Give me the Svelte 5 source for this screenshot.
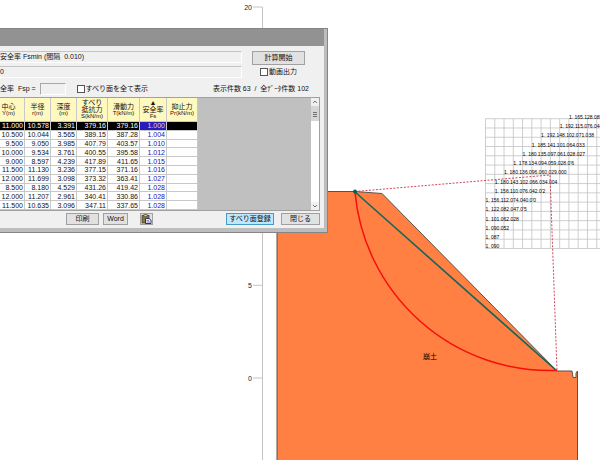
<script lang="ts">
  const columns = [
    { lines: ['中心'], unit: 'Y(m)', width: 32 },
    { lines: ['半径'], unit: 'r(m)', width: 26 },
    { lines: ['深度'], unit: '(m)', width: 26 },
    { lines: ['すべり', '抵抗力'], unit: 'S(kN/m)', width: 31 },
    { lines: ['滑動力'], unit: 'T(kN/m)', width: 32 },
    { lines: ['▲', '安全率'], unit: 'Fs', width: 27 },
    { lines: ['抑止力'], unit: 'Pr(kN/m)', width: 31 },
  ];

  const rows = [
    ['11.000', '10.578', '3.391', '379.16', '379.16', '1.000', ''],
    ['10.500', '10.044', '3.565', '389.15', '387.28', '1.004', ''],
    ['9.500', '9.050', '3.985', '407.79', '403.57', '1.010', ''],
    ['10.000', '9.534', '3.761', '400.55', '395.58', '1.012', ''],
    ['9.000', '8.597', '4.239', '417.89', '411.65', '1.015', ''],
    ['11.500', '11.130', '3.236', '377.15', '371.16', '1.016', ''],
    ['12.000', '11.699', '3.098', '373.32', '363.41', '1.027', ''],
    ['8.500', '8.180', '4.529', '431.26', '419.42', '1.028', ''],
    ['12.000', '11.207', '2.961', '340.41', '330.86', '1.028', ''],
    ['11.500', '10.635', '3.096', '347.11', '337.65', '1.028', ''],
  ];

  // elevation axis, metres to canvas
  const ticks = [20, 15, 10, 5, 0].map((value) => ({ value, y: 378 - value * 18.55 }));

  // search grid: first column that has a centre, then the Fs values of the row
  const cell = 9.27;
  const gridX = 485.5;
  const gridY = 118.7;
  const gridRows = [
    { col: 9, text: '1. 165.128.085' },
    { col: 8, text: '1. 192.115.076.044' },
    { col: 6, text: '1. 192.148.102.071.038' },
    { col: 5, text: '1. 185.141.101.064.033' },
    { col: 4, text: '1. 180.135.097.061.028.027' },
    { col: 3, text: "1. 178.134.094.059.028.0'6" },
    { col: 2, text: '1. 180.136.096.060.029.000' },
    { col: 1, text: '1. 180.143.102.066.034.004' },
    { col: 1, text: "1. 156.110.076.042.0'2" },
    { col: 0, text: "1. 156.112.074.040.0'0" },
    { col: 0, text: "1. 122.082.047.0'5" },
    { col: 0, text: '1. 101.062.028' },
    { col: 0, text: '1. 090.052' },
    { col: 0, text: '1. 087' },
    { col: 0, text: '1. 090' },
  ];

  let selected = $state(0);
  let showAll = $state(false);
  let movie = $state(false);
</script>

<main>
  <svg class="plot" viewBox="0 0 600 460" role="img" aria-label="斜面断面図">
    <g class="axis">
      <path d="M262.5 7V460" />
      {#each ticks as tick}
        <path d="M253 {tick.y}H262.5" />
        <text x="252" y={tick.y + 3} text-anchor="end">{tick.value}</text>
      {/each}
    </g>

    <path
      class="soil"
      d="M277 470V191.5H355L382 193.5L557 371H572L573 377.5H576V373L577.5 371V470Z"
    />
    <text class="soil-name" x="423" y="359">崩土</text>

    <g class="grid">
      {#each gridRows as _, i}
        <path d="M{gridX} {gridY + i * cell}H600" />
        <path d="M{gridX + i * cell} {gridY}V{gridY + 14 * cell}" />
      {/each}
    </g>
    <g class="grid-text">
      {#each gridRows as row, i}
        <text x={gridX + row.col * cell} y={gridY + i * cell}>{row.text}</text>
      {/each}
    </g>

    <path class="radius" d="M355 191.5L550 175L557 370.5" />
    <path class="chord" d="M355 192L557 371" />
    <path class="arc" d="M355 192A196 196 0 0 0 557 370.5" />
    <circle cx="355" cy="191.5" r="2" fill="#00605a" />
  </svg>

  <section class="window">
    <header class="titlebar"></header>
    <div class="body">
      <div class="top">
        <div class="fields">
          <div class="field">安全率 Fsmin (間隔&nbsp; 0.010)</div>
          <div class="field">0</div>
        </div>
        <div class="start">
          <button>計算開始</button>
          <label class="check"><input type="checkbox" bind:checked={movie} />動画出力</label>
        </div>
      </div>

      <div class="options">
        <label class="fsp">安全率&nbsp; Fsp =<input type="text" disabled /></label>
        <label class="check"><input type="checkbox" bind:checked={showAll} />すべり面を全て表示</label>
        <span class="count">表示件数 63 &nbsp;/&nbsp; 全ﾃﾞｰﾀ件数 102</span>
      </div>

      <div class="list">
        <table>
          <colgroup>
            {#each columns as column}
              <col style="width: {column.width}px" />
            {/each}
          </colgroup>
          <thead>
            <tr>
              {#each columns as column}
                <th>
                  {#each column.lines as line}
                    <div>{line}</div>
                  {/each}
                  <div class="unit">{column.unit}</div>
                </th>
              {/each}
            </tr>
          </thead>
          <tbody>
            {#each rows as row, i}
              <tr class:selected={i === selected} onclick={() => (selected = i)}>
                {#each row as value, c}
                  <td class:fs={c === 5}>{value}</td>
                {/each}
              </tr>
            {/each}
          </tbody>
        </table>
        <div class="scrollbar">
          <svg viewBox="0 0 8 8"><path d="M2 5L4 3L6 5" /></svg>
          <div class="thumb">
            <svg viewBox="0 0 8 8"><path d="M2 2.5H6M2 4.5H6M2 6.5H6" /></svg>
          </div>
          <svg class="down" viewBox="0 0 8 8"><path d="M2 3L4 5L6 3" /></svg>
        </div>
      </div>

      <footer>
        <button class="print">印刷</button>
        <button class="word">Word</button>
        <button class="paste" aria-label="貼り付け">
          <svg viewBox="0 0 11 10">
            <rect x="1" y="1.5" width="7" height="7.5" fill="#86763a" stroke="#4a4630" stroke-width="0.8" />
            <rect x="3" y="0.5" width="3" height="2" fill="#e5d989" stroke="#4a4630" stroke-width="0.6" />
            <path d="M4.5 4.5H8L10 6.2V9.5H4.5Z" fill="#fff" stroke="#20206c" stroke-width="0.9" />
            <path d="M5.5 6.4H8M5.5 8H9" stroke="#3b3b98" stroke-width="0.7" />
          </svg>
        </button>
        <button class="register">すべり面登録</button>
        <button class="close">閉じる</button>
      </footer>
    </div>
  </section>
</main>

<style>
  :global(body) {
    margin: 0;
    background: #fff;
  }

  main {
    position: relative;
    overflow: hidden;
    font: 7px/8px "Liberation Sans", "Noto Sans CJK JP", sans-serif;
    color: #111;
  }

  .plot {
    display: block;
    width: 100%;
  }

  .plot path {
    fill: none;
  }

  .axis path {
    stroke: #c4c4c4;
  }

  .axis text {
    font-size: 7px;
    fill: #222;
  }

  .plot .soil {
    fill: #ff8042;
    stroke: #5c5148;
  }

  .soil-name {
    font-size: 7px;
  }

  .grid path {
    stroke: #c3c3c3;
    stroke-width: 0.8;
  }

  .grid-text {
    font-size: 5px;
    fill: #000;
  }

  .radius {
    stroke: #c8324a;
    stroke-width: 0.9;
    stroke-dasharray: 2 1.5;
  }

  .chord {
    stroke: #14655c;
    stroke-width: 1.6;
  }

  .arc {
    stroke: #f80c0c;
    stroke-width: 1.5;
  }

  .window {
    position: absolute;
    top: 28px;
    left: -7px;
    width: 335px;
    box-sizing: border-box;
    border: 1px solid #858585;
    border-left: 0;
    padding: 0 3px 4px 0;
    background: #bdbdbd;
  }

  .titlebar {
    height: 17px;
    background: #929292;
  }

  .body {
    padding: 5px 4px 3px 0;
    background: #f0f0f0;
  }

  .top {
    display: flex;
    gap: 10px;
    padding-right: 15px;
  }

  .fields {
    flex: 1;
    display: flex;
    flex-direction: column;
    gap: 3px;
  }

  .field {
    height: 10px;
    padding-left: 7px;
    border: 1px solid #fff;
    border-top-color: #c4c4c4;
    border-left: 0;
    line-height: 10px;
  }

  .start {
    display: flex;
    flex-direction: column;
    align-items: center;
    gap: 3px;
    width: 53px;
  }

  button {
    box-sizing: border-box;
    height: 12px;
    padding: 0;
    border: 1px solid #a0a0a0;
    background: #e1e1e1;
    color: #111;
    font: inherit;
    white-space: nowrap;
  }

  .start button {
    width: 100%;
    height: 14px;
  }

  .check {
    display: flex;
    align-items: center;
    gap: 1px;
    white-space: nowrap;
  }

  .check input {
    appearance: none;
    box-sizing: border-box;
    width: 8px;
    height: 8px;
    margin: 0;
    border: 1px solid #555;
    background: #fff;
  }

  .check input:checked {
    background: #0078d7;
  }

  .options {
    display: flex;
    align-items: center;
    gap: 11px;
    height: 14px;
    padding: 4px 11px 1px 0;
  }

  .fsp {
    display: flex;
    align-items: center;
    gap: 4px;
    white-space: nowrap;
  }

  .fsp input {
    box-sizing: border-box;
    width: 26px;
    height: 12px;
    padding: 0;
    border: 1px solid #fff;
    border-top-color: #a8a8a8;
    border-left-color: #a8a8a8;
    background: #f0f0f0;
    font: inherit;
  }

  .count {
    margin-left: auto;
    white-space: nowrap;
  }

  .list {
    display: flex;
    justify-content: space-between;
    height: 112px;
    border: 1px solid #a0a0a0;
    border-left: 0;
    background: #c0c0c0;
  }

  table {
    width: 205px;
    height: 112px;
    table-layout: fixed;
    border-collapse: separate;
    border-spacing: 0;
  }

  th,
  td {
    box-sizing: border-box;
    padding: 0;
    border-right: 1px solid #c8c8c8;
    border-bottom: 1px solid #c8c8c8;
    white-space: nowrap;
  }

  th {
    height: 24px;
    background: #fff9c0;
    font-weight: normal;
    line-height: 7px;
  }

  .unit {
    font-size: 6px;
  }

  td {
    padding-right: 1px;
    background: #fff;
    line-height: 7px;
    text-align: right;
  }

  .fs {
    color: #1a10b8;
  }

  .selected td {
    background: #000;
    color: #fff;
  }

  .selected .fs {
    background: #2a1bbd;
    color: #e5dc8c;
  }

  .scrollbar {
    display: flex;
    flex-direction: column;
    width: 8px;
    background: #fff;
  }

  .scrollbar svg {
    width: 8px;
    height: 8px;
    background: #f0f0f0;
  }

  .scrollbar path {
    fill: none;
    stroke: #555;
    stroke-width: 0.8;
  }

  .thumb {
    display: flex;
    align-items: center;
    height: 15px;
    background: #d6d6d6;
  }

  .thumb svg {
    background: none;
  }

  .down {
    margin-top: auto;
  }

  footer {
    display: flex;
    gap: 4px;
    padding: 2px 0 0 73px;
  }

  .print {
    width: 33px;
  }

  .word {
    width: 25px;
    margin-right: 8px;
  }

  .paste {
    display: flex;
    align-items: center;
    justify-content: center;
    width: 13px;
  }

  .paste svg {
    width: 11px;
    height: 10px;
  }

  .register {
    width: 48px;
    margin: 0 3px 0 auto;
    border-color: #4a9bc4;
    background: #bee6fd;
  }

  .close {
    width: 39px;
  }
</style>
